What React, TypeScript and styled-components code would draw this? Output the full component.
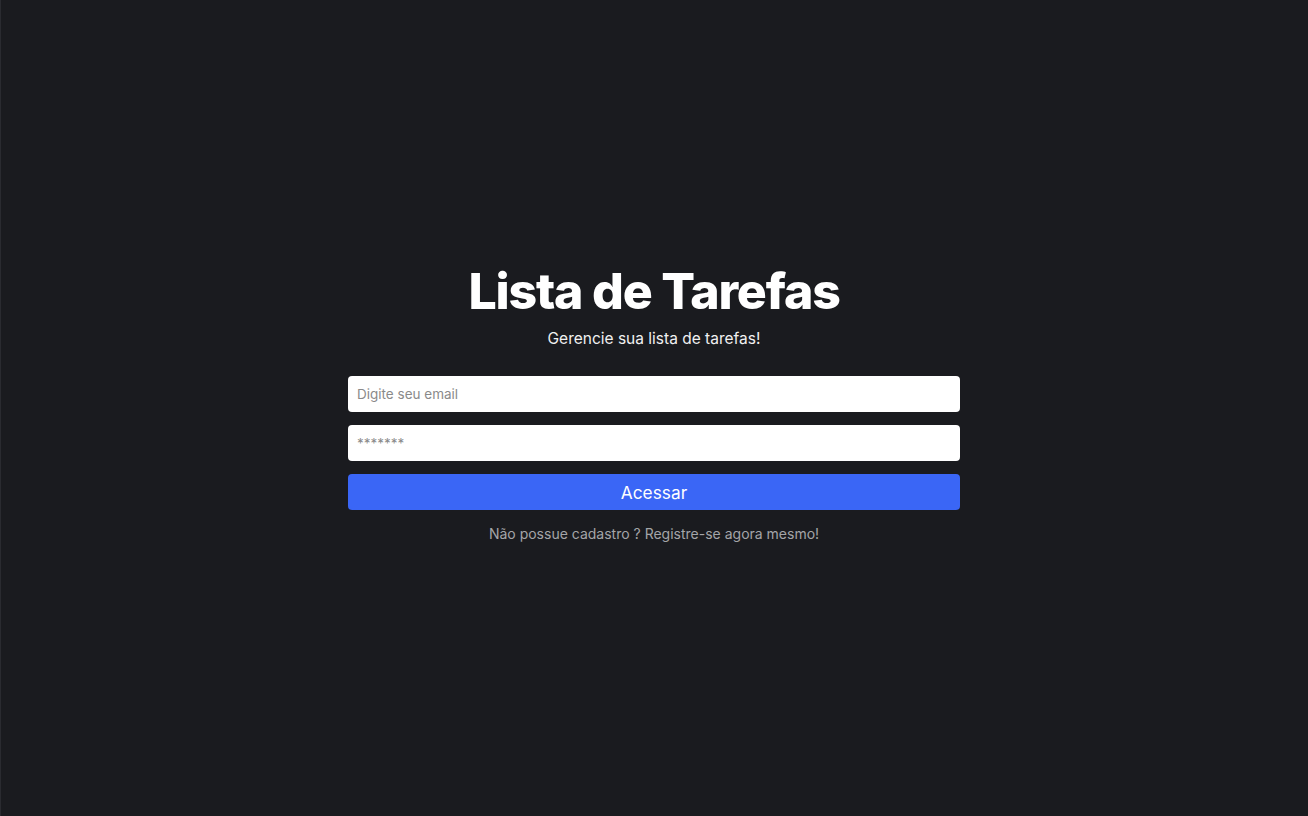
import React from "react";
import styled, { createGlobalStyle } from "styled-components";

const Global = createGlobalStyle`
  html, body { margin: 0; padding: 0; background: #1a1b1f; }
  body { font-family: Inter, "Noto Sans", sans-serif; }
  * { box-sizing: border-box; }
`;

const Page = styled.main`
  min-height: 816px;
  display: flex;
  align-items: center;
  justify-content: center;
  background: #1a1b1f;
  box-shadow: inset 1px 0 0 #2a2b30;
`;

const Form = styled.form`
  width: 612px;
  display: flex;
  flex-direction: column;
  align-items: center;
  margin-bottom: 13px;
`;

const Title = styled.h1`
  margin: 0;
  font-size: 50px;
  font-weight: 800;
  color: #ffffff;
  letter-spacing: -1.2px;
  line-height: 60px;
`;

const Subtitle = styled.p`
  margin: 8px 0 28px;
  font-size: 15.5px;
  color: #f1f1f1;
  line-height: 19px;
`;

const Input = styled.input`
  width: 100%;
  height: 36px;
  border: none;
  border-radius: 4px;
  background: #ffffff;
  padding: 0 9px;
  font-family: Inter, sans-serif;
  font-size: 13.5px;
  color: #333;
  margin-bottom: 13px;
  outline: none;
  &::placeholder { color: #8a8a8a; }
`;

const Button = styled.button`
  width: 100%;
  height: 36px;
  border: none;
  border-radius: 4px;
  background: #3a66f6;
  color: #ffffff;
  font-family: Inter, sans-serif;
  font-size: 17.3px;
  cursor: pointer;
`;

const Link = styled.a`
  margin-top: 15px;
  font-size: 14px;
  color: #a4a5a8;
  text-decoration: none;
  line-height: 17px;
`;

export default function App() {
  return (
    <>
      <Global />
      <Page>
        <Form onSubmit={(e) => e.preventDefault()}>
          <Title>Lista de Tarefas</Title>
          <Subtitle>Gerencie sua lista de tarefas!</Subtitle>
          <Input type="email" placeholder="Digite seu email" />
          <Input type="password" placeholder="*******" />
          <Button type="submit">Acessar</Button>
          <Link href="#">Não possue cadastro ? Registre-se agora mesmo!</Link>
        </Form>
      </Page>
    </>
  );
}
